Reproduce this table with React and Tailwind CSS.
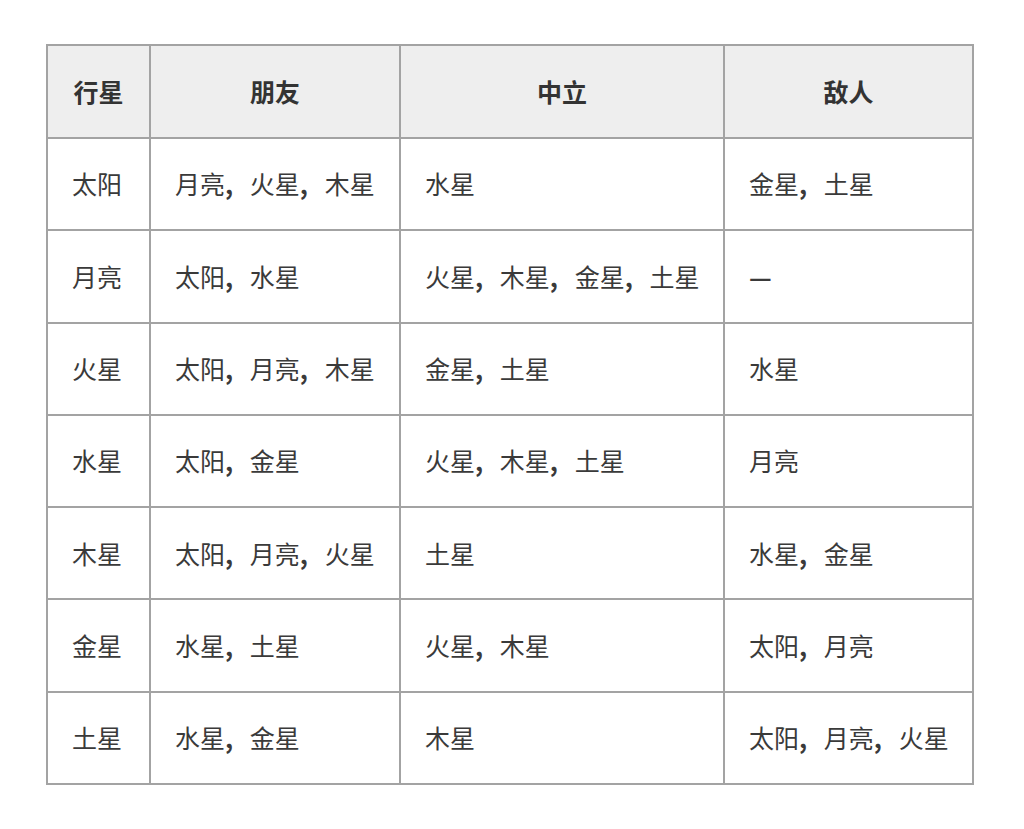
import React from 'react';

const rows = [
  ['太阳', '月亮, 火星, 木星', '水星', '金星, 土星'],
  ['月亮', '太阳, 水星', '火星, 木星, 金星, 土星', '—'],
  ['火星', '太阳, 月亮, 木星', '金星, 土星', '水星'],
  ['水星', '太阳, 金星', '火星, 木星, 土星', '月亮'],
  ['木星', '太阳, 月亮, 火星', '土星', '水星, 金星'],
  ['金星', '水星, 土星', '火星, 木星', '太阳, 月亮'],
  ['土星', '水星, 金星', '木星', '太阳, 月亮, 火星'],
];

const headers = ['行星', '朋友', '中立', '敌人'];
const widths = ['w-[103px]', 'w-[250px]', 'w-[324px]', 'w-[249px]'];

function Cell({ text }) {
  if (text === '—') return <span className="font-bold">—</span>;
  const parts = text.split(', ');
  return parts.map((p, i) => (
    <React.Fragment key={i}>
      {p}
      {i < parts.length - 1 && <span className="font-bold">, </span>}
    </React.Fragment>
  ));
}

export default function App() {
  return (
    <div
      className="min-h-screen bg-white pt-[44px] pl-[46px]"
      style={{ fontFamily: '"Noto Sans CJK SC", "Noto Sans", sans-serif' }}
    >
      <table className="border-collapse table-fixed w-[927px] text-[25px] text-[#3a3a3a]">
        <thead>
          <tr className="h-[93px] bg-[#eeeeee]">
            {headers.map((h, i) => (
              <th key={h} className={`${widths[i]} border-2 border-[#a3a3a3] font-bold text-center text-[#333]`}>
                {h}
              </th>
            ))}
          </tr>
        </thead>
        <tbody>
          {rows.map((r) => (
            <tr key={r[0]} className="h-[92.3px]">
              {r.map((c, i) => (
                <td key={i} className="border-2 border-[#a3a3a3] px-6 text-left whitespace-nowrap [word-spacing:11px]">
                  <Cell text={c} />
                </td>
              ))}
            </tr>
          ))}
        </tbody>
      </table>
    </div>
  );
}
